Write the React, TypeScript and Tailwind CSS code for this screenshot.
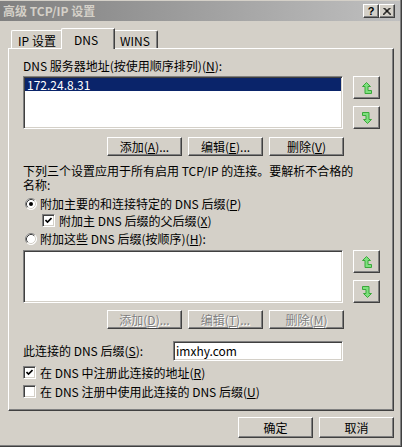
import React from "react";

const raised =
  "border border-t-white border-l-white border-r-[#404040] border-b-[#404040] shadow-[inset_-1px_-1px_#808080]";
const sunken =
  "border border-t-[#808080] border-l-[#808080] border-r-white border-b-white shadow-[inset_1px_1px_#404040,inset_-1px_-1px_#d4d0c8]";

function U({ children }: { children: React.ReactNode }) {
  return <span className="underline underline-offset-1">{children}</span>;
}

function Btn({
  children,
  w = "w-[75px]",
  h = "h-[19px]",
  disabled,
}: {
  children: React.ReactNode;
  w?: string;
  h?: string;
  disabled?: boolean;
}) {
  return (
    <button
      className={`${raised} ${w} ${h} bg-[#d4d0c8] flex items-center justify-center text-[12px] leading-none ${
        disabled ? "text-[#808080] [text-shadow:1px_1px_#ffffff]" : "text-black"
      }`}
    >
      {children}
    </button>
  );
}

function Arrow({ down }: { down?: boolean }) {
  return (
    <svg width="10" height="12" viewBox="0 0 10 12" className={down ? "rotate-180" : ""}>
      <polygon
        points="4.5,0.5 8.5,4.5 6,4.5 6,8.5 9.5,8.5 9.5,11.5 3,11.5 3,4.5 0.5,4.5"
        fill="#7ee07e"
        stroke="#3aa83a"
        strokeWidth="1"
      />
    </svg>
  );
}

function MoveButtons() {
  return (
    <div className="flex flex-col gap-[7px]">
      <button className={`${raised} w-[27px] h-[23px] bg-[#d4d0c8] flex items-center justify-center`}>
        <Arrow />
      </button>
      <button className={`${raised} w-[27px] h-[23px] bg-[#d4d0c8] flex items-center justify-center`}>
        <Arrow down />
      </button>
    </div>
  );
}

function Radio({ checked }: { checked?: boolean }) {
  return (
    <svg width="12" height="12" viewBox="0 0 12 12" className="shrink-0">
      <circle cx="6" cy="6" r="5.5" fill="#ffffff" />
      <path d="M2.11 9.89 A5.5 5.5 0 0 1 9.89 2.11" stroke="#808080" fill="none" />
      <path d="M9.89 2.11 A5.5 5.5 0 0 1 2.11 9.89" stroke="#ffffff" fill="none" />
      <path d="M2.82 9.18 A4.5 4.5 0 0 1 9.18 2.82" stroke="#404040" fill="none" />
      <path d="M9.18 2.82 A4.5 4.5 0 0 1 2.82 9.18" stroke="#d4d0c8" fill="none" />
      {checked && <circle cx="6" cy="6" r="2" fill="#000000" />}
    </svg>
  );
}

function Check({ checked }: { checked?: boolean }) {
  return (
    <div className={`${sunken} w-[13px] h-[13px] bg-white shrink-0 flex items-center justify-center`}>
      {checked && (
        <svg width="7" height="7" viewBox="0 0 7 7">
          <path d="M0.5 3 L2.5 5 L6.5 1" stroke="#000" strokeWidth="1.6" fill="none" />
        </svg>
      )}
    </div>
  );
}

export default function App() {
  return (
    <div className="w-[402px] h-[447px] bg-[#d4d0c8] border-r border-b border-r-[#404040] border-b-[#404040] shadow-[inset_-1px_-1px_#808080] overflow-hidden flex flex-col text-[12px] text-black font-['Noto_Sans_CJK_SC',sans-serif]">
      {/* title bar */}
      <div className="mt-[1px] h-[20px] w-[400px] flex items-center justify-between pl-[3px] pr-[5px] bg-gradient-to-r from-[#808080] to-[#c0c0c0]">
        <span className="font-bold text-[#d4d0c8] text-[12px] leading-none">高级 TCP/IP 设置</span>
        <div className="flex">
          <div className={`${raised} w-[16px] h-[14px] bg-[#d4d0c8] flex items-center justify-center font-['Liberation_Sans',sans-serif] font-bold text-[11px] leading-none`}>
            ?
          </div>
          <div className={`${raised} w-[16px] h-[14px] bg-[#d4d0c8] flex items-center justify-center`}>
            <svg width="8" height="7" viewBox="0 0 8 7">
              <path d="M0.5 0 L7.5 7 M1.5 0 L8.5 7 M7.5 0 L0.5 7 M6.5 0 L-0.5 7" stroke="#000" strokeWidth="1" />
            </svg>
          </div>
        </div>
      </div>

      {/* tabs */}
      <div className="mt-[7px] h-[20px] pl-[11px] flex items-end">
        <div className="h-[18px] w-[52px] border-t border-l border-t-white border-l-white border-r border-r-[#404040] shadow-[inset_-1px_0_#808080] rounded-tl-[2px] flex items-center justify-center pt-[2px]">
          IP 设置
        </div>
        <div className="relative z-10 -mb-[1px] -mx-[2px] h-[21px] w-[54px] bg-[#d4d0c8] border-t border-l border-t-white border-l-white border-r border-r-[#404040] shadow-[inset_-1px_0_#808080] rounded-tl-[2px] flex items-start justify-center pt-[2px] pr-[4px]">
          DNS
        </div>
        <div className="h-[18px] w-[45px] border-t border-t-white border-r border-r-[#404040] shadow-[inset_-1px_0_#808080] rounded-tr-[2px] flex items-center justify-center pt-[2px]">
          WINS
        </div>
      </div>

      {/* panel */}
      <div className={`${raised} ml-[8px] w-[386px] h-[363px] pl-[14px] pt-[10px] flex flex-col`}>
        <div className="h-[13px] leading-[13px] whitespace-nowrap">
          DNS 服务器地址(按使用顺序排列)(<U>N</U>):
        </div>
        <div className="mt-[4px] flex gap-[10px]">
          <div className={`${sunken} w-[320px] h-[53px] bg-white pt-[1px] px-[1px]`}>
            <div className="h-[13px] leading-[13px] bg-[#0a246a] text-white pl-[2px]">172.24.8.31</div>
          </div>
          <MoveButtons />
        </div>
        <div className="mt-[8px] pl-[84px] flex gap-[6px]">
          <Btn>
            添加(<U>A</U>)...
          </Btn>
          <Btn>
            编辑(<U>E</U>)...
          </Btn>
          <Btn>
            删除(<U>V</U>)
          </Btn>
        </div>
        <div className="mt-[8px] leading-[14px] whitespace-nowrap">
          下列三个设置应用于所有启用 TCP/IP 的连接。要解析不合格的
          <br />
          名称:
        </div>
        <div className="mt-[5px] h-[13px] ml-[2px] flex items-center gap-[3px] whitespace-nowrap">
          <Radio checked />
          <span>
            附加主要的和连接特定的 DNS 后缀(<U>P</U>)
          </span>
        </div>
        <div className="mt-[4px] h-[13px] ml-[19px] flex items-center gap-[4px] whitespace-nowrap">
          <Check checked />
          <span>
            附加主 DNS 后缀的父后缀(<U>X</U>)
          </span>
        </div>
        <div className="mt-[5px] h-[13px] ml-[2px] flex items-center gap-[3px] whitespace-nowrap">
          <Radio />
          <span>
            附加这些 DNS 后缀(按顺序)(<U>H</U>):
          </span>
        </div>
        <div className="mt-[5px] flex gap-[10px]">
          <div className={`${sunken} w-[320px] h-[53px] bg-white`} />
          <MoveButtons />
        </div>
        <div className="mt-[7px] pl-[84px] flex gap-[6px]">
          <Btn disabled>
            添加(<U>D</U>)...
          </Btn>
          <Btn disabled>
            编辑(<U>T</U>)...
          </Btn>
          <Btn disabled>
            删除(<U>M</U>)
          </Btn>
        </div>
        <div className="mt-[12px] h-[20px] flex items-center">
          <span className="w-[150px] whitespace-nowrap">
            此连接的 DNS 后缀(<U>S</U>):
          </span>
          <div className={`${sunken} w-[170px] h-[20px] bg-white flex items-center pl-[2px]`}>imxhy.com</div>
        </div>
        <div className="mt-[5px] h-[13px] flex items-center gap-[4px] whitespace-nowrap">
          <Check checked />
          <span>
            在 DNS 中注册此连接的地址(<U>R</U>)
          </span>
        </div>
        <div className="mt-[6px] h-[13px] flex items-center gap-[4px] whitespace-nowrap">
          <Check />
          <span>
            在 DNS 注册中使用此连接的 DNS 后缀(<U>U</U>)
          </span>
        </div>
      </div>

      {/* dialog buttons */}
      <div className="mt-[6px] pr-[7px] flex justify-end gap-[6px]">
        <Btn h="h-[21px]">确定</Btn>
        <Btn h="h-[21px]">取消</Btn>
      </div>
    </div>
  );
}
